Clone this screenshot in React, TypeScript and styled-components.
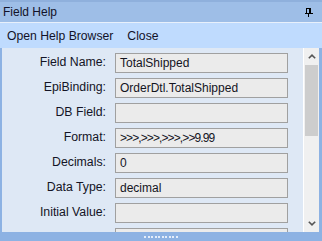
import React from "react";
import styled, { createGlobalStyle } from "styled-components";

const Global = createGlobalStyle`
  html, body { margin: 0; padding: 0; background: #dde8f5; }
  body { font-family: "Liberation Sans", Arial, sans-serif; font-size: 12px; }
  * { box-sizing: border-box; }
`;

const Window = styled.div`
  width: 322px;
  height: 241px;
  display: flex;
  flex-direction: column;
  overflow: hidden;
  color: #121222;
`;

const TitleBar = styled.div`
  flex: none;
  display: flex;
  align-items: center;
  justify-content: space-between;
  padding: 0 9px 0 3px;
  background: #9ebee7;
  border-top: 2px solid #8fb0dc;
  border-bottom: 1px solid #e8f0fb;
  height: 23px;
`;

const Title = styled.span`
  font-size: 12px;
  color: #121228;
  line-height: 20px;
`;

const MenuBar = styled.div`
  height: 25px;
  flex: none;
  display: flex;
  align-items: center;
  background: #bfdbfe;
`;

const MenuItem = styled.span`
  padding: 1px 7px 0;
  font-size: 12.2px;
  line-height: 25px;
  color: #121228;
`;

const Body = styled.div`
  flex: 1;
  min-height: 0;
  display: flex;
  border-left: 2px solid #8db2e3;
  border-right: 3px solid #8db2e3;
  background: #dee8f5;
`;

const Content = styled.div`
  flex: 1;
  overflow: hidden;
  padding-top: 5px;
`;

const Form = styled.div`
  display: grid;
  grid-template-columns: 104px 173px;
  column-gap: 9px;
  row-gap: 5px;
  grid-auto-rows: 20px;
`;

const Label = styled.div`
  text-align: right;
  line-height: 19px;
  font-size: 12.3px;
  color: #141426;
  white-space: nowrap;
`;

const Field = styled.div<{ $tight?: boolean }>`
  height: 20px;
  border: 1px solid #a0a0a0;
  background: #ebebeb;
  padding-left: 4px;
  line-height: 18px;
  font-size: 12px;
  color: #14141e;
  white-space: nowrap;
  overflow: hidden;
  letter-spacing: ${(p) => (p.$tight ? "-0.9px" : "0")};
`;

const ScrollBar = styled.div`
  width: 16px;
  flex: none;
  display: flex;
  flex-direction: column;
  border-left: 1px solid #ffffff;
  background: #f0f0f0;
`;

const ArrowBox = styled.div`
  height: 17px;
  flex: none;
  display: flex;
  align-items: center;
  justify-content: center;
`;

const Thumb = styled.div`
  height: 71px;
  margin: 0 1px;
  background: #cdcdcd;
  flex: none;
`;

const Track = styled.div`
  flex: 1;
`;

const BottomBar = styled.div`
  height: 9px;
  flex: none;
  background: #8db2e3;
  display: flex;
  justify-content: center;
  align-items: center;
  padding-left: 2px;
`;

const rows: { label: string; value: string; tight?: boolean }[] = [
  { label: "Field Name:", value: "TotalShipped" },
  { label: "EpiBinding:", value: "OrderDtl.TotalShipped" },
  { label: "DB Field:", value: "" },
  { label: "Format:", value: ">>>,>>>,>>>,>>9.99", tight: true },
  { label: "Decimals:", value: "0" },
  { label: "Data Type:", value: "decimal" },
  { label: "Initial Value:", value: "" },
  { label: "Column Label:", value: "" },
];

const Pin = () => (
  <svg width="8" height="9" viewBox="0 0 8 9">
    <rect x="1.5" y="0.5" width="4" height="5" fill="none" stroke="#000" />
    <rect x="4" y="0" width="2" height="6" fill="#000" />
    <rect x="0" y="5" width="8" height="1" fill="#000" />
    <rect x="3" y="6" width="1" height="3" fill="#000" />
  </svg>
);

const Chevron = ({ up }: { up?: boolean }) => (
  <svg width="8" height="5" viewBox="0 0 8 5">
    <path
      d={up ? "M0.8 4.3 L4 1.2 L7.2 4.3" : "M0.8 0.7 L4 3.8 L7.2 0.7"}
      fill="none"
      stroke="#555"
      strokeWidth="1.6"
    />
  </svg>
);

const Grip = () => (
  <svg width="36" height="2" viewBox="0 0 36 2">
    {Array.from({ length: 10 }).map((_, i) => (
      <rect key={i} x={Math.round(i * 3.5)} y="0" width="2" height="2" fill="#e4edfa" />
    ))}
  </svg>
);

export default function App() {
  return (
    <>
      <Global />
      <Window>
        <TitleBar>
          <Title>Field Help</Title>
          <Pin />
        </TitleBar>
        <MenuBar>
          <MenuItem>Open Help Browser</MenuItem>
          <MenuItem>Close</MenuItem>
        </MenuBar>
        <Body>
          <Content>
            <Form>
              {rows.map((r) => (
                <React.Fragment key={r.label}>
                  <Label>{r.label}</Label>
                  <Field $tight={r.tight}>{r.value}</Field>
                </React.Fragment>
              ))}
            </Form>
          </Content>
          <ScrollBar>
            <ArrowBox>
              <Chevron up />
            </ArrowBox>
            <Thumb />
            <Track />
            <ArrowBox>
              <Chevron />
            </ArrowBox>
          </ScrollBar>
        </Body>
        <BottomBar>
          <Grip />
        </BottomBar>
      </Window>
    </>
  );
}
